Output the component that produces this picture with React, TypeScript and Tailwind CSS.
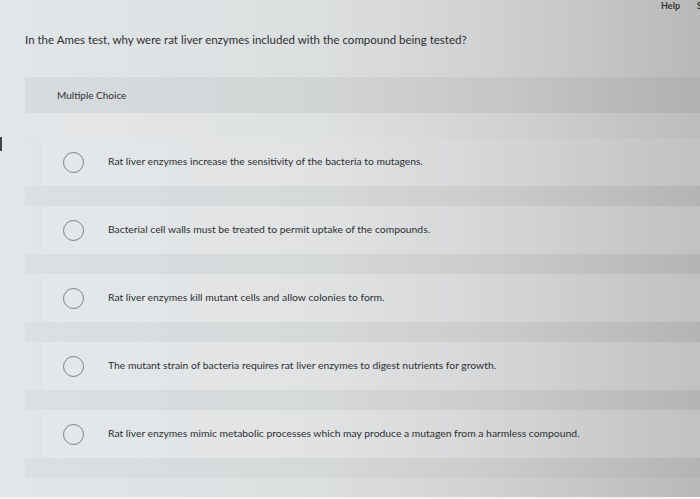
import React from 'react';

const OPTIONS = [
  'Rat liver enzymes increase the sensitivity of the bacteria to mutagens.',
  'Bacterial cell walls must be treated to permit uptake of the compounds.',
  'Rat liver enzymes kill mutant cells and allow colonies to form.',
  'The mutant strain of bacteria requires rat liver enzymes to digest nutrients for growth.',
  'Rat liver enzymes mimic metabolic processes which may produce a mutagen from a harmless compound.',
];

const App: React.FC = () => {
  return (
    <div
      className="relative w-[700px] h-[499px] overflow-hidden bg-[linear-gradient(to_right,#e3e6e8_0%,#dcdfe0_45%,#d0d1d2_70%,#b9b9b9_100%)] text-[#2e2f31]"
      style={{ fontFamily: 'Lato, "Open Sans", "Liberation Sans", sans-serif' }}
    >
      {/* top bar */}
      <div className="h-[18px] flex justify-end items-start gap-[17px]">
        <span className="text-[9px] font-bold text-[#333] leading-[11px]">Help</span>
        <span className="text-[9px] font-bold text-[#333] leading-[11px] w-[3px] overflow-hidden">S</span>
      </div>

      {/* question */}
      <div className="pl-[25px] pt-[15px] h-[59px]">
        <p className="text-[11.5px] leading-[14px]">In the Ames test, why were rat liver enzymes included with the compound being tested?</p>
      </div>

      {/* question panel */}
      <div className="ml-[25px]">
        <div className="h-[36px] bg-black/[0.045] flex items-center pl-[32px]">
          <span className="text-[10px]">Multiple Choice</span>
        </div>
        <div className="h-[25px] bg-white/[0.05]" />

        <div className="flex flex-col">
          {OPTIONS.map((text, i) => (
            <div key={i} className="flex flex-col">
              <div className="ml-[17px] h-[48px] bg-white/[0.12] flex items-center">
                <span className="ml-[21px] w-[21px] h-[21px] rounded-full border-[1.5px] border-[#7d7f81] shrink-0" />
                <span className="ml-[24px] text-[10.35px]">{text}</span>
              </div>
              <div className="h-[20px] bg-black/[0.025]" />
            </div>
          ))}
        </div>
      </div>

      {/* edge mark */}
      <div className="absolute left-0 top-[137px] w-[2px] h-[14px] bg-[#444]" />
      {/* bottom edge */}
      <div className="absolute left-0 bottom-0 w-full h-[2px] bg-[#f4f4f4]" />
    </div>
  );
};

export default App;
